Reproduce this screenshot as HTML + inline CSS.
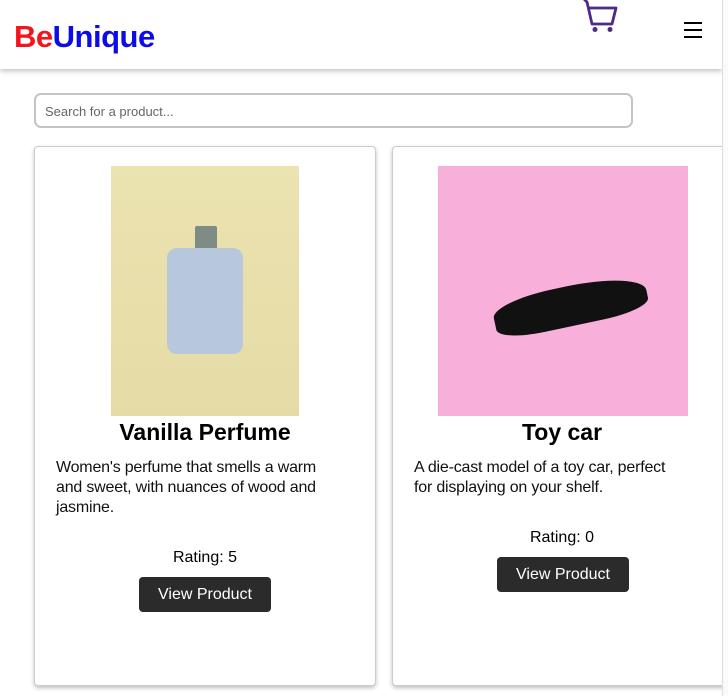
<!DOCTYPE html>
<html><head><style>
body{margin:0;width:728px;height:696px;overflow:hidden;background:#fff;font-family:"Liberation Sans",sans-serif;position:relative}
.hdr{position:absolute;left:0;top:0;width:722px;height:69px;background:#fff;box-shadow:0 2px 5px rgba(0,0,0,.25);z-index:2}
.logo{position:absolute;left:14px;top:19px;font-size:31px;font-weight:bold;letter-spacing:-0.5px}
.sb{position:absolute;left:722px;top:0;width:6px;height:696px;background:#fafafa;border-left:1px solid #ddd;z-index:3}
.search{position:absolute;left:34px;top:93px;width:599px;height:35px;border:2px solid #c4c4c4;border-radius:7px;box-sizing:border-box;font-size:13px;color:#666;padding:9px 9px}
.card{position:absolute;top:146px;height:540px;background:#fff;border:1px solid #ccc;border-radius:4px;box-shadow:0 2px 4px rgba(0,0,0,.25);box-sizing:border-box}
.t{position:absolute;width:100%;text-align:center;font-size:23px;font-weight:bold}
.d{position:absolute;left:21px;right:0;font-size:16px;line-height:20px;color:#111;letter-spacing:-0.2px;white-space:nowrap}
.r{position:absolute;width:100%;text-align:center;font-size:16px}
.btn{position:absolute;background:#2b2b2b;color:#fff;border-radius:4px;font-size:16px;text-align:center;line-height:35px;height:35px;width:132px}
</style></head><body>
<div class="hdr">
<div class="logo"><span style="color:#f5141e">Be</span><span style="color:#0c0ce8">Unique</span></div>
<svg style="position:absolute;left:580px;top:0" width="40" height="36" viewBox="0 0 40 36"><path d="M3 -2 L7 2 L12 24 L32 24 L36 8 L9 8" fill="none" stroke="#4b2a8a" stroke-width="2.8" stroke-linejoin="round"/><circle cx="15" cy="29.5" r="2.5" fill="#4b2a8a"/><circle cx="30" cy="29.5" r="2.5" fill="#4b2a8a"/></svg>
<div style="position:absolute;left:684px;top:22px;width:18px;height:2px;background:#000;box-shadow:0 7px 0 #000,0 14px 0 #000"></div>
</div>
<div class="sb"></div>
<div class="search">Search for a product...</div>
<div class="card" style="left:34px;width:342px">
<div style="position:absolute;left:76px;top:19px;width:188px;height:250px;background:linear-gradient(#ebe3b0,#e5dba6)">
<div style="position:absolute;left:84px;top:60px;width:22px;height:26px;background:#7d8c84;border-radius:2px"></div>
<div style="position:absolute;left:56px;top:82px;width:76px;height:106px;background:#b8c8dc;border-radius:10px"></div>
</div>
<div class="t" style="top:272px">Vanilla Perfume</div>
<div class="d" style="top:311px">Women's perfume that smells a warm<br>and sweet, with nuances of wood and<br>jasmine.</div>
<div class="r" style="top:402px">Rating: 5</div>
<div class="btn" style="left:104px;top:430px">View Product</div>
</div>
<div class="card" style="left:392px;width:340px">
<div style="position:absolute;left:45px;top:19px;width:250px;height:250px;background:#f8b0da">
<div style="position:absolute;left:55px;top:120px;width:155px;height:40px;background:#111;border-radius:40% 50% 30% 30%;transform:rotate(-12deg)"></div>
</div>
<div class="t" style="top:272px">Toy car</div>
<div class="d" style="top:311px">A die-cast model of a toy car, perfect<br>for displaying on your shelf.</div>
<div class="r" style="top:382px">Rating: 0</div>
<div class="btn" style="left:104px;top:410px">View Product</div>
</div>
</body></html>
